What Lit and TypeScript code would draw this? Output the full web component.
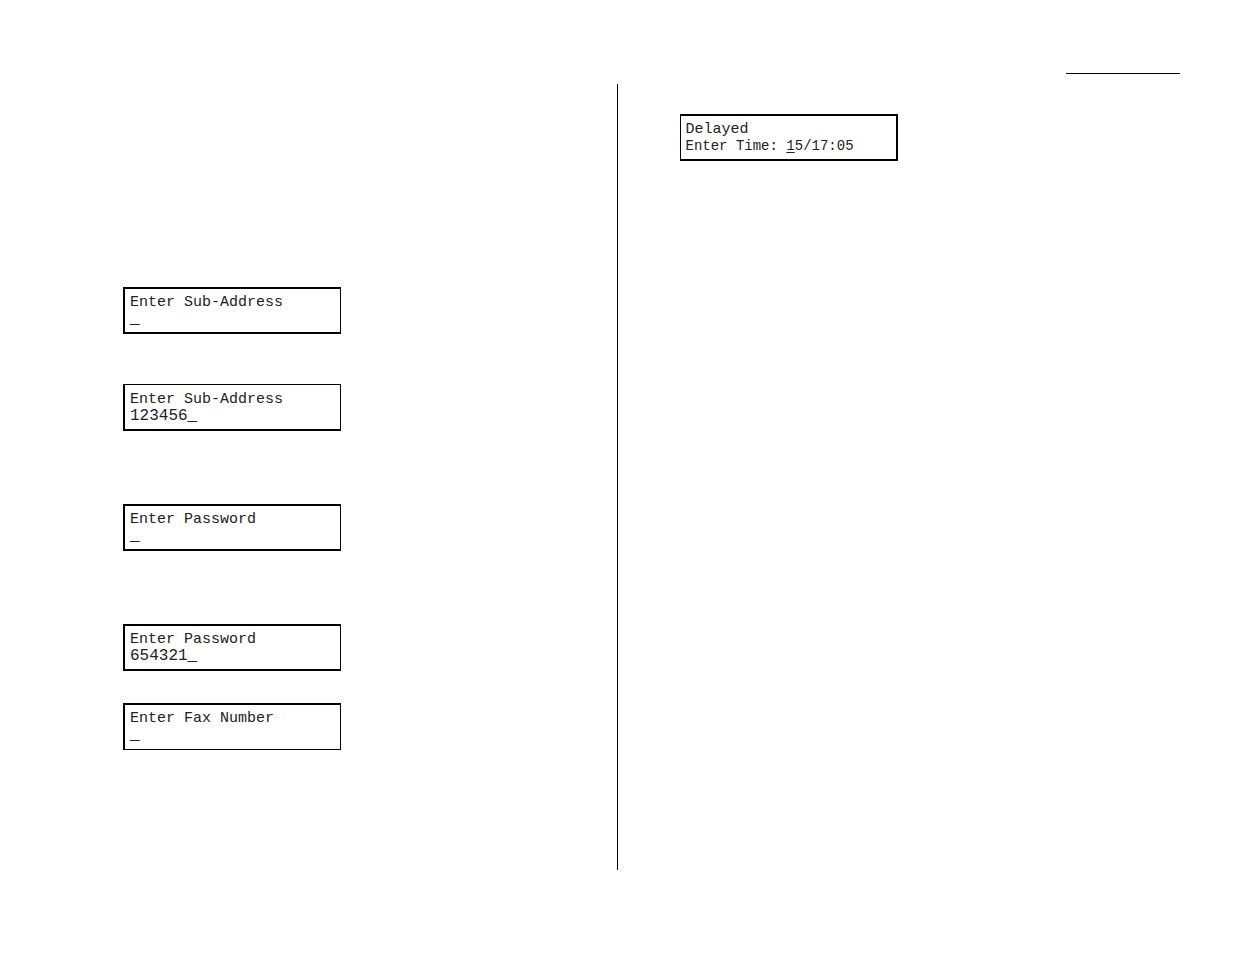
import { LitElement, html, css } from "lit";
import { customElement, property } from "lit/decorators.js";

/** A two-line fax display panel. */
@customElement("lcd-panel")
class LcdPanel extends LitElement {
  @property() heading = "";
  @property() value = "";
  @property() prompt = "";
  @property() active = "";
  @property() rest = "";

  static styles = css`
    :host {
      display: block;
      box-sizing: border-box;
      width: 218px;
      padding: 5px 4px 4px 5px;
      border: 2px solid #000;
      border-right-width: var(--panel-right, 1px);
      border-left-width: var(--panel-left, 2px);
      border-top-width: var(--panel-top, 2px);
      border-bottom-width: var(--panel-bottom, 2px);
      color: #222;
      font-family: "Liberation Mono", "Courier New", monospace;
      font-size: 15px;
      line-height: 17px;
      white-space: pre;
    }
    .line {
      height: 17px;
    }
    .entry {
      font-size: 16px;
    }
    .time {
      font-size: 14px;
    }
    .active {
      text-decoration: underline;
      text-decoration-thickness: 1px;
      text-underline-offset: 2px;
    }
  `;

  render() {
    return html`<div class="line">${this.heading}</div>${this.prompt
        ? html`<div class="line time">${this.prompt}<span class="active">${this.active}</span>${this.rest}</div>`
        : html`<div class="line entry">${this.value}_</div>`}`;
  }
}

@customElement("app-root")
class AppRoot extends LitElement {
  static styles = css`
    :host {
      display: flex;
      flex-direction: column;
      box-sizing: border-box;
      min-height: 100vh;
      padding: 73px 0 84px;
      background: #fff;
    }
    .header {
      display: flex;
      justify-content: flex-end;
      padding: 0 55px 10px 0;
    }
    .rule {
      width: 114px;
      height: 1px;
      margin: 0;
      border: 0;
      background: #000;
    }
    .columns {
      flex: 1;
      display: grid;
      grid-template-columns: 1fr 1fr;
    }
    .left {
      padding: 203px 0 0 123px;
      border-right: 1px solid #000;
    }
    .right {
      padding: 30px 0 0 62px;
    }
    .right lcd-panel {
      --panel-left: 1px;
      --panel-right: 2px;
    }
    .group {
      display: flex;
      flex-direction: column;
      gap: 50px;
      margin-bottom: 73px;
    }
    .close {
      gap: 32px;
      margin-bottom: 0;
    }
    .thin-top {
      --panel-top: 1px;
      padding-top: 6px;
    }
    .thin-bottom {
      --panel-bottom: 1px;
      padding-bottom: 5px;
    }
  `;

  render() {
    return html`
      <header class="header"><hr class="rule" /></header>
      <main class="columns">
        <section class="left">
          <div class="group">
            <lcd-panel heading="Enter Sub-Address"></lcd-panel>
            <lcd-panel class="thin-top" heading="Enter Sub-Address" value="123456"></lcd-panel>
          </div>
          <div class="group">
            <lcd-panel heading="Enter Password"></lcd-panel>
          </div>
          <div class="group close">
            <lcd-panel heading="Enter Password" value="654321"></lcd-panel>
            <lcd-panel class="thin-bottom" heading="Enter Fax Number"></lcd-panel>
          </div>
        </section>
        <section class="right">
          <lcd-panel heading="Delayed" prompt="Enter Time: " active="1" rest="5/17:05"></lcd-panel>
        </section>
      </main>
    `;
  }
}
